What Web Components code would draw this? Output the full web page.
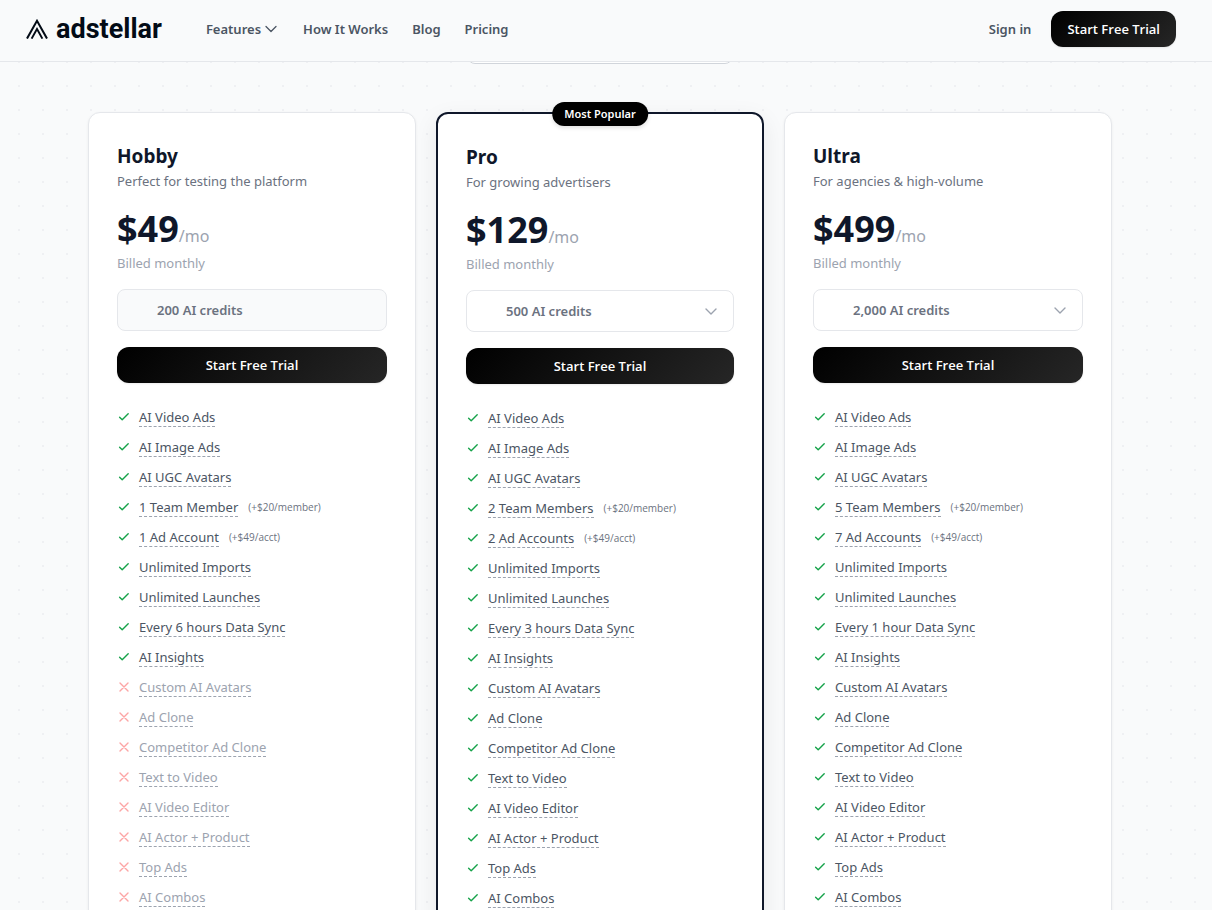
<!DOCTYPE html>
<html lang="en">
<head>
<meta charset="utf-8">
<meta name="viewport" content="width=device-width, initial-scale=1">
<title>Adstellar pricing</title>
<style>
html, body { margin: 0; height: 100%; }
body { overflow: hidden; background: #f9fafb; font: 13px/20px "Noto Sans", "Segoe UI", sans-serif; color: #111827; }
</style>
</head>
<body>
<pricing-page></pricing-page>
<script>
const define = (name, html, init) => customElements.define(name, class extends HTMLElement {
  constructor() {
    super();
    const t = document.createElement('template');
    t.innerHTML = html;
    this.attachShadow({ mode: 'open' }).append(t.content.cloneNode(true));
  }
  connectedCallback() { if (init && !this.ready) { this.ready = true; init(this, this.shadowRoot); } }
});

define('brand-logo', `
<style>
:host { display: block; }
a { display: flex; align-items: center; gap: 8px; color: #030b16; text-decoration: none; font: 700 27px/36px Roboto, sans-serif; }
svg { display: block; }
</style>
<a href="#"><svg width="22" height="20" viewBox="0 0 22 20" fill="none" stroke="currentColor" stroke-width="2"><path d="M1 19.6 11 1.8 21 19.6"/><path d="M5.6 19.6 11 10 16.4 19.6" stroke-width="1.9"/></svg><span>adstellar</span></a>`);

define('trial-button', `
<style>
:host { display: block; }
button { width: 100%; height: 36px; padding: 0 16px; border: 0; border-radius: 12px; color: #fff; background: linear-gradient(135deg, #000, #262626); font: 600 13px/20px "Open Sans", sans-serif; box-shadow: 0 1px 2px rgb(0 0 0 / 8%); cursor: pointer; white-space: nowrap; }
</style>
<button type="button"><slot></slot></button>`);

define('site-header', `
<style>
:host { display: block; background: #f9fafb; border-bottom: 1px solid #e5e7eb; }
header { display: flex; align-items: center; height: 61px; box-sizing: border-box; padding: 0 36px 3px 26px; }
nav { display: flex; gap: 24px; margin-left: 44px; }
a, .menu { display: flex; align-items: center; gap: 4px; padding: 0; border: 0; background: none; color: #4b5563; text-decoration: none; font: 600 13px/20px "Noto Sans", sans-serif; white-space: nowrap; }
.menu { gap: 2px; }
.end { display: flex; align-items: center; gap: 20px; margin-left: auto; }
</style>
<header>
<brand-logo></brand-logo>
<nav><button class="menu" type="button">Features <svg width="16" height="16" viewBox="0 0 16 16" fill="none" stroke="currentColor" stroke-width="1.3" stroke-linecap="round" stroke-linejoin="round"><path d="m3 5.5 5 5 5-5"/></svg></button><a href="#">How It Works</a><a href="#">Blog</a><a href="#">Pricing</a></nav>
<div class="end"><a href="#">Sign in</a><trial-button>Start Free Trial</trial-button></div>
</header>`);

define('feature-item', `
<style>
:host { display: flex; align-items: center; gap: 8px; height: 20px; color: #4b5563; }
:host([off]) { color: #9ca3af; }
svg { flex: none; fill: none; stroke: #16a34a; stroke-width: 1.4; stroke-linecap: round; stroke-linejoin: round; }
:host([off]) svg { stroke: #fca5a5; }
.cross, :host([off]) .tick { display: none; }
:host([off]) .cross { display: inline; }
.name { border-bottom: 1px dashed #9ca3af; font-size: 13px; line-height: 18px; }
small { font-family: "Open Sans", sans-serif; font-size: 10px; line-height: 20px; color: #6b7280; margin-left: 2px; }
</style>
<svg width="14" height="14" viewBox="0 0 14 14"><path class="tick" d="m2.6 7.2 2.6 2.6 6-6"/><path class="cross" d="m3 3 8 8M11 3l-8 8"/></svg>
<span class="name"><slot></slot></span><small></small>`,
(el, r) => { const s = r.querySelector('small'); el.hasAttribute('note') ? s.textContent = el.getAttribute('note') : s.remove(); });

define('credit-picker', `
<style>
:host { display: block; position: relative; }
select, .fixed { display: block; box-sizing: border-box; width: 100%; height: 42px; padding: 0 39px; border: 1px solid #e5e7eb; border-radius: 8px; color: #6b7280; background: #fff; font: 600 13px/40px "Noto Sans", sans-serif; appearance: none; }
.fixed { background: #f9fafb; }
svg { position: absolute; right: 15px; top: 13px; fill: none; stroke: #9ca3af; stroke-width: 1.4; stroke-linecap: round; stroke-linejoin: round; pointer-events: none; }
</style>`,
(el, r) => {
  const box = document.createElement(el.hasAttribute('fixed') ? 'div' : 'select');
  if (el.hasAttribute('fixed')) { box.className = 'fixed'; box.textContent = el.getAttribute('value'); r.append(box); return; }
  box.setAttribute('aria-label', 'AI credits');
  box.append(new Option(el.getAttribute('value')));
  r.append(box);
  r.append(document.createRange().createContextualFragment('<svg width="16" height="16" viewBox="0 0 16 16"><path d="m3 6 5 5 5-5"/></svg>'));
});

define('plan-card', `
<style>
:host { display: block; position: relative; box-sizing: border-box; padding: 28px; border: 1px solid #e5e7eb; border-radius: 12px; background: #fff; box-shadow: 0 1px 3px rgb(0 0 0 / 6%); }
:host([popular]) { border: 2px solid #0f172a; box-shadow: 0 8px 24px rgb(15 23 42 / 8%); }
.badge { position: absolute; top: -12px; left: 50%; transform: translateX(-50%); padding: 0 12px; border-radius: 12px; background: #000; color: #fff; font-size: 11px; font-weight: 600; line-height: 24px; white-space: nowrap; box-shadow: 0 2px 4px rgb(0 0 0 / 12%); }
:host(:not([popular])) .badge { display: none; }
h2 { margin: 0; font-size: 19px; line-height: 30px; font-weight: 700; color: #0f172a; }
p { margin: 0; font-size: 13px; line-height: 20px; }
.about { color: #6b7280; }
.price { display: flex; align-items: baseline; height: 44px; margin-top: 16px; }
.price strong { font-size: 36px; line-height: 44px; color: #0f172a; }
.price span { font-size: 16px; line-height: 20px; color: #9ca3af; }
.billed { margin-top: 2px; color: #9ca3af; }
::slotted(credit-picker), trial-button { margin-top: 16px; }
.list { display: grid; gap: 10px; margin-top: 24px; }
</style>
<div class="badge">Most Popular</div>
<h2></h2><p class="about"></p>
<div class="price"><strong></strong><span>/mo</span></div>
<p class="billed">Billed monthly</p>
<slot name="credits"></slot>
<trial-button>Start Free Trial</trial-button>
<div class="list"><slot></slot></div>`,
(el, r) => {
  r.querySelector('h2').textContent = el.getAttribute('name');
  r.querySelector('.about').textContent = el.getAttribute('about');
  r.querySelector('strong').textContent = el.getAttribute('price');
});

const plans = [
  { name: 'Hobby', about: 'Perfect for testing the platform', price: '$49', credits: '200 AI credits', fixed: true, team: '1 Team Member', accounts: '1 Ad Account', sync: 'Every 6 hours Data Sync', included: 9 },
  { name: 'Pro', about: 'For growing advertisers', price: '$129', credits: '500 AI credits', popular: true, team: '2 Team Members', accounts: '2 Ad Accounts', sync: 'Every 3 hours Data Sync', included: 99 },
  { name: 'Ultra', about: 'For agencies &amp; high-volume', price: '$499', credits: '2,000 AI credits', team: '5 Team Members', accounts: '7 Ad Accounts', sync: 'Every 1 hour Data Sync', included: 99 }
];
const features = p => ['AI Video Ads', 'AI Image Ads', 'AI UGC Avatars', p.team, p.accounts, 'Unlimited Imports', 'Unlimited Launches', p.sync, 'AI Insights', 'Custom AI Avatars', 'Ad Clone', 'Competitor Ad Clone', 'Text to Video', 'AI Video Editor', 'AI Actor + Product', 'Top Ads', 'AI Combos'];
const notes = { 3: '(+$20/member)', 4: '(+$49/acct)' };
const card = p => `<plan-card name="${p.name}" about="${p.about}" price="${p.price}"${p.popular ? ' popular' : ''}>
<credit-picker slot="credits" value="${p.credits}"${p.fixed ? ' fixed' : ''}></credit-picker>
${features(p).map((f, i) => `<feature-item${i >= p.included ? ' off' : ''}${notes[i] ? ` note="${notes[i]}"` : ''}>${f}</feature-item>`).join('')}
</plan-card>`;

define('pricing-page', `
<style>
:host { display: flex; flex-direction: column; height: 100vh; overflow: hidden; }
main { flex: 1; min-height: 0; padding-right: 12px; background: radial-gradient(circle at 1px 1px, #eff0f3 1px, transparent 1px) 18px -1px / 24px 24px; }
.period { display: flex; align-items: flex-end; height: 2px; max-width: 266px; margin: 0 auto; overflow: hidden; }
.period div { flex: 1; height: 40px; box-sizing: border-box; border: 1px solid #d1d5db; border-radius: 8px; background: #fff; }
.plans { display: grid; grid-template-columns: repeat(3, minmax(0, 1fr)); gap: 20px; max-width: 1024px; margin: 48px auto 0; }
plan-card { padding-bottom: 60px; }
</style>
<site-header></site-header>
<main><div class="period"><div></div></div><div class="plans">${plans.map(card).join('')}</div></main>`);
</script>
</body>
</html>
